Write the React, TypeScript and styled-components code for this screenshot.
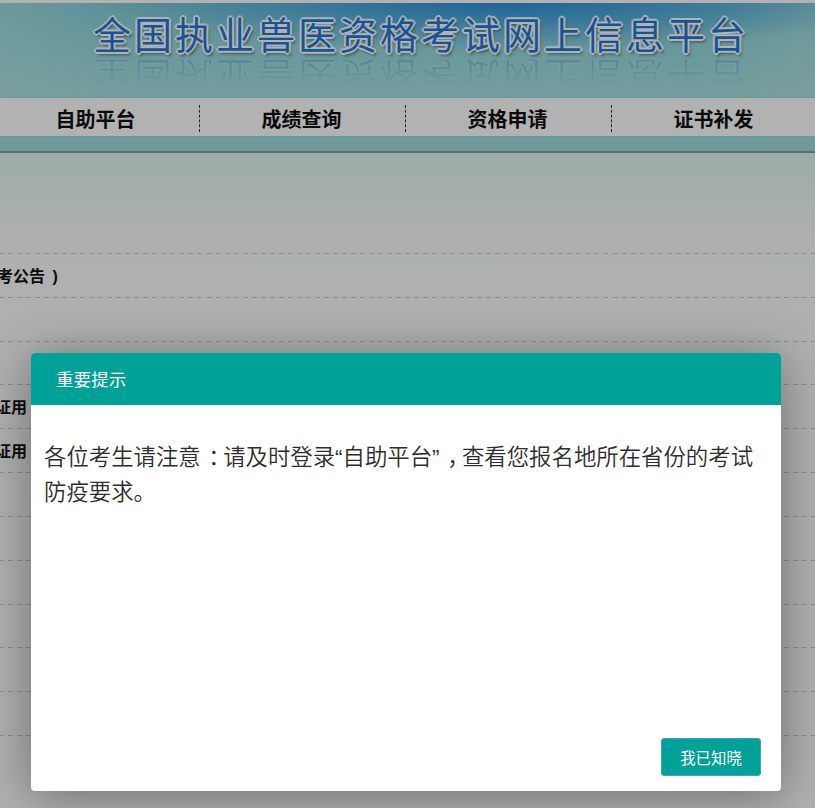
import React from 'react';
import styled, { createGlobalStyle } from 'styled-components';

const GlobalStyle = createGlobalStyle`
  html, body {
    margin: 0;
    padding: 0;
    height: 100%;
    overflow: hidden;
    background-color: #fff;
    font-family: "Liberation Sans", "Noto Sans CJK SC", sans-serif;
  }
`;

const Page = styled.div`
  position: relative;
  height: 808px;
  overflow: hidden;
  background-color: #fff;
`;

const Banner = styled.div`
  height: 94px;
  margin-top: 3px;
  overflow: hidden;
  background:
    radial-gradient(ellipse 400px 52px at 500px -4px, rgba(38, 140, 220, 1), rgba(38, 140, 220, 0) 100%),
    linear-gradient(90deg, rgba(190, 240, 235, 0.35) 0, rgba(190, 240, 235, 0) 120px, rgba(190, 240, 235, 0) 720px, rgba(190, 235, 225, 0.35) 815px),
    linear-gradient(180deg, #85cfd8 0%, #9ddcde 65%, #a8e2e2 100%);
`;

const BannerTitle = styled.h1`
  margin: 0;
  padding: 5px 0 0 93px;
  font-family: "Noto Sans CJK SC", sans-serif;
  font-size: 38px;
  line-height: 50px;
  font-weight: 400;
  letter-spacing: 3px;
  white-space: nowrap;
  color: #1f7ad6;
  text-shadow:
    -2px 0 0.5px #fff, 2px 0 0.5px #fff, 0 -2px 0.5px #fff, 0 2px 0.5px #fff,
    -1px -1px 0.5px #fff, 1px -1px 0.5px #fff, -1px 1px 0.5px #fff, 1px 1px 0.5px #fff,
    2px 3px 3px #50757a;
`;

const BannerReflection = styled(BannerTitle)`
  height: 36px;
  padding-top: 0;
  line-height: 36px;
  overflow: hidden;
  margin-top: 2px;
  transform: scaleY(-1);
  opacity: 0.24;
  text-shadow: -1px 0 1px #fff, 1px 0 1px #fff, 0 -1px 1px #fff, 0 1px 1px #fff;
  mask-image: linear-gradient(to top, #000 0%, transparent 70%);
`;

const Nav = styled.nav`
  display: flex;
  height: 40px;
  margin-left: -6px;
  width: 1000px;
  background-color: #fff;
  border-top: 1px solid #9edcdc;
  border-bottom: 1px solid #98d4d6;
  box-sizing: border-box;
`;

const NavItem = styled.a<{ $last?: boolean }>`
  position: relative;
  flex: 0 0 206px;
  padding-right: 3px;
  box-sizing: border-box;
  text-align: center;
  font-family: "Noto Sans CJK SC", sans-serif;
  font-size: 20px;
  font-weight: 700;
  line-height: 42px;
  color: #111;

  &::after {
    content: '';
    display: ${(p) => (p.$last ? 'none' : 'block')};
    position: absolute;
    right: 0;
    top: 7px;
    height: 27px;
    border-right: 1px dashed #333;
  }
`;

const Band = styled.div`
  height: 14px;
  background-color: #9fdcdd;
  border-bottom: 2px solid #7aa2a0;
`;

const Content = styled.div`
  height: 655px;
  padding-top: 57px;
  box-sizing: border-box;
  background: linear-gradient(180deg, #dff7f3 0%, #f6fbfa 11%, #fcfcfc 18%, #fcfcfc 100%);
`;

const Row = styled.div`
  display: flex;
  align-items: center;
  height: 43.85px;
  box-sizing: border-box;
  border-bottom: 1px solid transparent;
  border-image: repeating-linear-gradient(90deg, #cacaca 0 5px, transparent 5px 9px) 1;
`;

const Clipped = styled.span<{ $shift: number }>`
  margin: 3px 0 0 ${(p) => p.$shift}px;
  font-size: 16px;
  font-weight: 700;
  line-height: 20px;
  word-spacing: 3px;
  color: #111;
  white-space: nowrap;
`;

const Overlay = styled.div`
  position: absolute;
  inset: 0;
  display: flex;
  padding: 353px 34px 17px 31px;
  box-sizing: border-box;
  background-color: rgba(0, 0, 0, 0.3);
`;

const Modal = styled.div`
  flex: 1;
  display: flex;
  flex-direction: column;
  overflow: hidden;
  background-color: #fff;
  border-radius: 4px;
  box-shadow: 0 5px 50px rgba(0, 0, 0, 0.38);
`;

const ModalHeader = styled.div`
  display: flex;
  align-items: center;
  height: 50px;
  padding: 0 0 2px 25px;
  background-color: #00a196;
  font-size: 17.6px;
  color: #fff;
`;

const ModalBody = styled.div`
  flex: 1;
  padding: 33px 13px 0;
  font-size: 22.4px;
  font-weight: 350;
  line-height: 35px;
  color: #2e2e2e;
`;

const Punct = styled.span`
  display: inline-block;
  width: 1em;
  text-indent: 0.34em;
  white-space: nowrap;
  font-family: "Noto Sans CJK SC", sans-serif;
`;

const ModalFooter = styled.div`
  display: flex;
  justify-content: flex-end;
  padding: 0 20px 15px;
`;

const ConfirmButton = styled.button`
  width: 100px;
  height: 38px;
  padding: 0;
  background-color: #00a196;
  border: 1px solid #3f9fd0;
  border-radius: 3px;
  font-family: inherit;
  font-size: 15.4px;
  color: #fff;
  cursor: pointer;
`;

const navItems = ['自助平台', '成绩查询', '资格申请', '证书补发'];

const rows: { text: string; shift: number }[] = [
  { text: '', shift: 0 },
  { text: '考公告 )', shift: -3 },
  { text: '', shift: 0 },
  { text: '', shift: 0 },
  { text: '证用', shift: -5 },
  { text: '证用', shift: -5 },
  { text: '', shift: 0 },
  { text: '', shift: 0 },
  { text: '', shift: 0 },
  { text: '', shift: 0 },
  { text: '', shift: 0 },
  { text: '', shift: 0 },
];

const title = '全国执业兽医资格考试网上信息平台';

const App: React.FC = () => (
  <Page>
    <GlobalStyle />
    <Banner>
      <BannerTitle>{title}</BannerTitle>
      <BannerReflection aria-hidden="true">{title}</BannerReflection>
    </Banner>
    <Nav>
      {navItems.map((item, i) => (
        <NavItem key={item} $last={i === navItems.length - 1}>
          {item}
        </NavItem>
      ))}
    </Nav>
    <Band />
    <Content>
      {rows.map((row, i) => (
        <Row key={i}>
          {row.text && <Clipped $shift={row.shift}>{row.text}</Clipped>}
        </Row>
      ))}
    </Content>
    <Overlay>
      <Modal>
        <ModalHeader>重要提示</ModalHeader>
        <ModalBody>
          各位考生请注意<Punct>：</Punct>请及时登录“自助平台”<Punct>，</Punct>查看您报名地所在省份的考试防疫要求。
        </ModalBody>
        <ModalFooter>
          <ConfirmButton>我已知晓</ConfirmButton>
        </ModalFooter>
      </Modal>
    </Overlay>
  </Page>
);

export default App;
